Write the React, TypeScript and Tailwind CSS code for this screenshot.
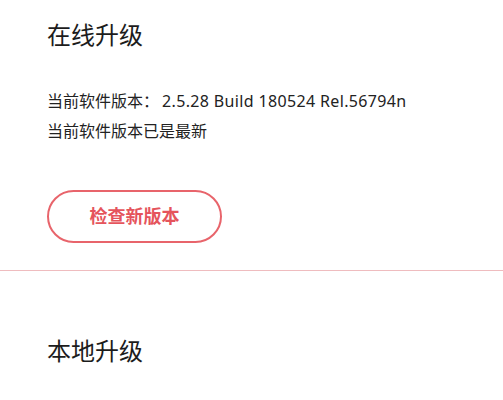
export default function App() {
  return (
    <div
      className="min-h-[400px] w-[503px] bg-white"
      style={{ fontFamily: '"Microsoft YaHei", "Noto Sans", "Noto Sans CJK SC", sans-serif' }}
    >
      <section className="pl-[47px] pt-[19px]">
        <h2 className="text-[24px] leading-[32px] text-[#1c1c1c]">在线升级</h2>
        <div className="mt-[35px] text-[16px] leading-[30px] text-[#222]">
          <p>
            当前软件版本：<span className="ml-[3px] tracking-[0.35px]">2.5.28 Build 180524 Rel.56794n</span>
          </p>
          <p>当前软件版本已是最新</p>
        </div>
        <button className="mt-[44px] flex h-[53px] w-[175px] items-center justify-center rounded-full border-2 border-[#e8646b] text-[18px] font-bold text-[#e5545c]">
          检查新版本
        </button>
      </section>
      <div className="mt-[27px] h-px bg-[#efbcbf]" />
      <section className="pl-[47px] pt-[64px]">
        <h2 className="text-[24px] leading-[32px] text-[#1c1c1c]">本地升级</h2>
      </section>
    </div>
  );
}
